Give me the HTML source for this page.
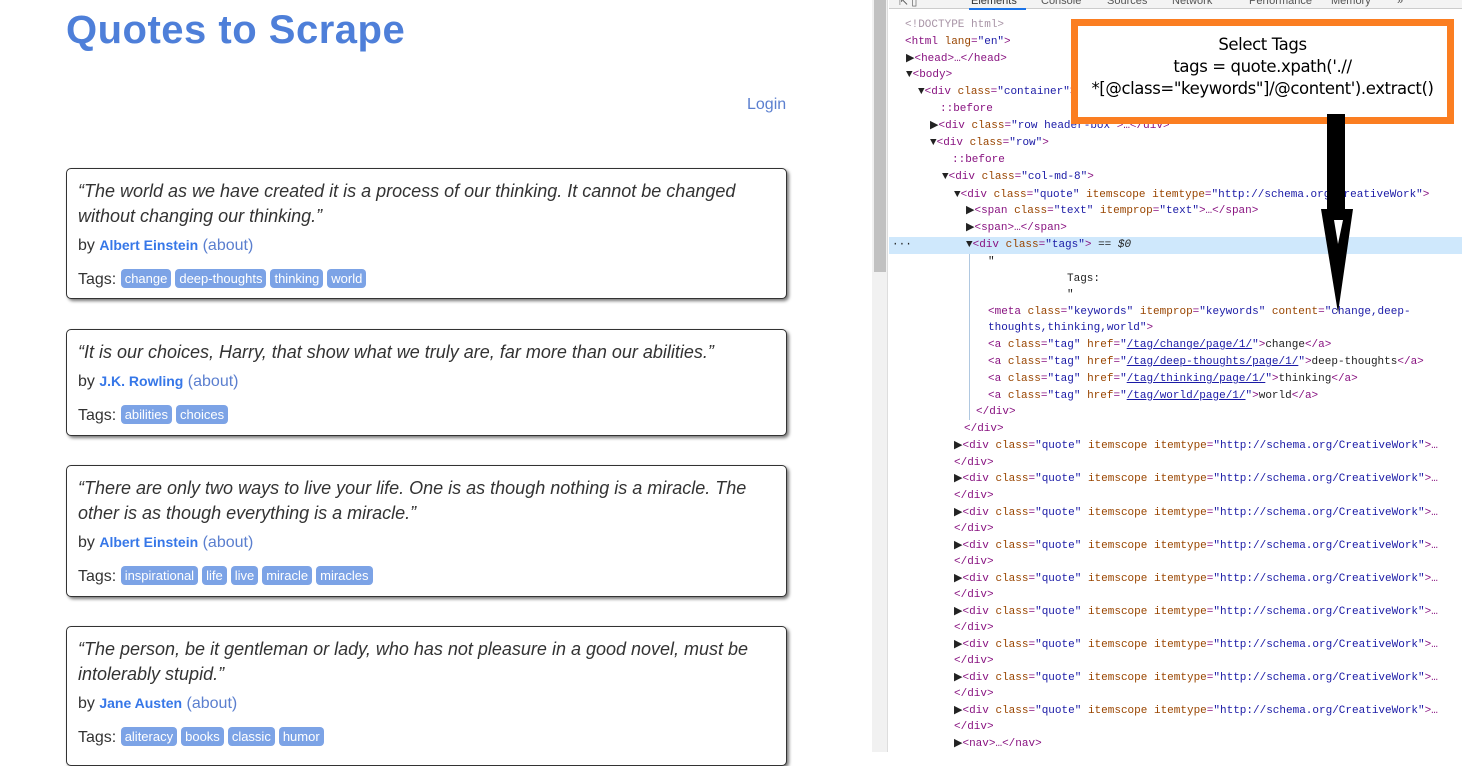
<!DOCTYPE html>
<html><head><meta charset="utf-8">
<style>
*{margin:0;padding:0;box-sizing:border-box}
body{width:1462px;height:752px;overflow:hidden;background:#fff;position:relative;font-family:"Liberation Sans",sans-serif}
.title{position:absolute;left:66px;top:8px;font-size:40px;font-weight:bold;color:#4e7fd9;letter-spacing:0.5px}
.login{position:absolute;left:747px;top:96px;font-size:16px;color:#5b7fcf}
.q{position:absolute;left:66px;width:721px;border:1px solid #333;border-radius:5px;box-shadow:2px 2px 3px #777;padding:10px 11px;color:#333;background:#fff}
.q .t{font-style:italic;font-size:18px;line-height:25px}
.q .b{font-size:16px;margin-top:6px;line-height:20px}
.q .b b{color:#3677e8;font-size:14px;font-weight:bold}
.q .b span{color:#5b7fcf}
.q .g{font-size:16px;margin-top:13px;line-height:20px}
.tag{display:inline-block;background:#7ca3e6;color:#fff;font-size:13px;padding:2px 4px 2px;border-radius:4px;margin-right:4px;line-height:15px;vertical-align:1px}
.sb{position:absolute;left:872px;top:0;width:16px;height:752px;background:#f1f1f1;border-right:1px solid #ddd}
.th{position:absolute;left:874px;top:0;width:12px;height:272px;background:#c1c1c1}
.tb{position:absolute;left:889px;top:0;width:573px;height:9px;border-bottom:1px solid #ccc;background:#f3f3f3;font-size:11px;color:#555;overflow:hidden}
.tb span{position:absolute;top:-5px}
.l{position:absolute;font-family:"Liberation Mono",monospace;font-size:11px;white-space:pre;color:#881280;line-height:14px}
.a{color:#994500}.v{color:#1a1aa6}.gr{color:#a894a6}.k{color:#222}.u{color:#1a1aa6;text-decoration:underline}
.hl{position:absolute;left:889px;top:237px;width:573px;height:17px;background:#cfe8fc}
.box{position:absolute;left:1071px;top:19px;width:383px;height:105px;border:7px solid #fb7e21;background:#fff;text-align:center;font-family:"DejaVu Sans","Liberation Sans",sans-serif;font-size:16.5px;line-height:22px;padding-top:8px;color:#000;letter-spacing:-0.4px}
</style></head><body>
<div class="title">Quotes to Scrape</div>
<div class="login">Login</div>

<div class="q" style="top:168px;height:131px"><div class="t">“The world as we have created it is a process of our thinking. It cannot be changed without changing our thinking.”</div><div class="b">by <b>Albert Einstein</b> <span>(about)</span></div><div class="g">Tags: <span class="tag">change</span><span class="tag">deep-thoughts</span><span class="tag">thinking</span><span class="tag">world</span></div></div>
<div class="q" style="top:329px;height:107px"><div class="t">“It is our choices, Harry, that show what we truly are, far more than our abilities.”</div><div class="b">by <b>J.K. Rowling</b> <span>(about)</span></div><div class="g">Tags: <span class="tag">abilities</span><span class="tag">choices</span></div></div>
<div class="q" style="top:465px;height:132px"><div class="t">“There are only two ways to live your life. One is as though nothing is a miracle. The other is as though everything is a miracle.”</div><div class="b">by <b>Albert Einstein</b> <span>(about)</span></div><div class="g">Tags: <span class="tag">inspirational</span><span class="tag">life</span><span class="tag">live</span><span class="tag">miracle</span><span class="tag">miracles</span></div></div>
<div class="q" style="top:626px;height:140px"><div class="t">“The person, be it gentleman or lady, who has not pleasure in a good novel, must be intolerably stupid.”</div><div class="b">by <b>Jane Austen</b> <span>(about)</span></div><div class="g">Tags: <span class="tag">aliteracy</span><span class="tag">books</span><span class="tag">classic</span><span class="tag">humor</span></div></div>

<div class="sb"></div><div class="th"></div>
<div class="tb"><span style="left:10px">⇱ ▯</span><span style="left:82px;color:#333">Elements</span><span style="left:152px">Console</span><span style="left:218px">Sources</span><span style="left:283px">Network</span><span style="left:360px">Performance</span><span style="left:442px">Memory</span><span style="left:508px">»</span></div>
<div style="position:absolute;left:969px;top:8px;width:57px;height:2px;background:#1a73e8"></div>
<div class="hl"></div>
<div style="position:absolute;left:969px;top:254px;width:1px;height:166px;background:#b0c8e0"></div>

<div class="l gr" style="left:905px;top:18px">&lt;!DOCTYPE html&gt;</div>
<div class="l" style="left:905px;top:35px">&lt;html <span class="a">lang</span>=<span class="v">"en"</span>&gt;</div>
<div class="l" style="left:906px;top:52px"><span class="k">▶</span>&lt;head&gt;…&lt;/head&gt;</div>
<div class="l" style="left:906px;top:68px"><span class="k">▼</span>&lt;body&gt;</div>
<div class="l" style="left:918px;top:85px"><span class="k">▼</span>&lt;div <span class="a">class</span>=<span class="v">"container"</span>&gt;</div>
<div class="l" style="left:940px;top:102px">::before</div>
<div class="l" style="left:930px;top:119px"><span class="k">▶</span>&lt;div <span class="a">class</span>=<span class="v">"row header-box"</span>&gt;…&lt;/div&gt;</div>
<div class="l" style="left:930px;top:136px"><span class="k">▼</span>&lt;div <span class="a">class</span>=<span class="v">"row"</span>&gt;</div>
<div class="l" style="left:952px;top:153px">::before</div>
<div class="l" style="left:942px;top:170px"><span class="k">▼</span>&lt;div <span class="a">class</span>=<span class="v">"col-md-8"</span>&gt;</div>
<div class="l" style="left:954px;top:188px"><span class="k">▼</span>&lt;div <span class="a">class</span>=<span class="v">"quote"</span> <span class="a">itemscope</span> <span class="a">itemtype</span>=<span class="v">"http://schema.org/CreativeWork"</span>&gt;</div>
<div class="l" style="left:966px;top:204px"><span class="k">▶</span>&lt;span <span class="a">class</span>=<span class="v">"text"</span> <span class="a">itemprop</span>=<span class="v">"text"</span>&gt;…&lt;/span&gt;</div>
<div class="l" style="left:966px;top:221px"><span class="k">▶</span>&lt;span&gt;…&lt;/span&gt;</div>
<div class="l k" style="left:892px;top:238px">···</div>
<div class="l" style="left:966px;top:238px"><span class="k">▼</span>&lt;div <span class="a">class</span>=<span class="v">"tags"</span>&gt; <span class="k">== <i>$0</i></span></div>
<div class="l k" style="left:988px;top:255px">"</div>
<div class="l k" style="left:1067px;top:272px">Tags:</div>
<div class="l k" style="left:1067px;top:288px">"</div>
<div class="l" style="left:988px;top:305px">&lt;meta <span class="a">class</span>=<span class="v">"keywords"</span> <span class="a">itemprop</span>=<span class="v">"keywords"</span> <span class="a">content</span>=<span class="v">"change,deep-</span></div>
<div class="l v" style="left:988px;top:321px">thoughts,thinking,world"<span style="color:#881280">&gt;</span></div>
<div class="l" style="left:988px;top:338px">&lt;a <span class="a">class</span>=<span class="v">"tag"</span> <span class="a">href</span>=<span class="v">"<span class="u">/tag/change/page/1/</span>"</span>&gt;<span class="k">change</span>&lt;/a&gt;</div>
<div class="l" style="left:988px;top:355px">&lt;a <span class="a">class</span>=<span class="v">"tag"</span> <span class="a">href</span>=<span class="v">"<span class="u">/tag/deep-thoughts/page/1/</span>"</span>&gt;<span class="k">deep-thoughts</span>&lt;/a&gt;</div>
<div class="l" style="left:988px;top:372px">&lt;a <span class="a">class</span>=<span class="v">"tag"</span> <span class="a">href</span>=<span class="v">"<span class="u">/tag/thinking/page/1/</span>"</span>&gt;<span class="k">thinking</span>&lt;/a&gt;</div>
<div class="l" style="left:988px;top:389px">&lt;a <span class="a">class</span>=<span class="v">"tag"</span> <span class="a">href</span>=<span class="v">"<span class="u">/tag/world/page/1/</span>"</span>&gt;<span class="k">world</span>&lt;/a&gt;</div>
<div class="l" style="left:976px;top:405px">&lt;/div&gt;</div>
<div class="l" style="left:964px;top:422px">&lt;/div&gt;</div>

<div class="l" style="left:954px;top:439px"><span class="k">▶</span>&lt;div <span class="a">class</span>=<span class="v">"quote"</span> <span class="a">itemscope</span> <span class="a">itemtype</span>=<span class="v">"http://schema.org/CreativeWork"</span>&gt;…</div>
<div class="l" style="left:954px;top:456px">&lt;/div&gt;</div>
<div class="l" style="left:954px;top:472px"><span class="k">▶</span>&lt;div <span class="a">class</span>=<span class="v">"quote"</span> <span class="a">itemscope</span> <span class="a">itemtype</span>=<span class="v">"http://schema.org/CreativeWork"</span>&gt;…</div>
<div class="l" style="left:954px;top:489px">&lt;/div&gt;</div>
<div class="l" style="left:954px;top:506px"><span class="k">▶</span>&lt;div <span class="a">class</span>=<span class="v">"quote"</span> <span class="a">itemscope</span> <span class="a">itemtype</span>=<span class="v">"http://schema.org/CreativeWork"</span>&gt;…</div>
<div class="l" style="left:954px;top:522px">&lt;/div&gt;</div>
<div class="l" style="left:954px;top:539px"><span class="k">▶</span>&lt;div <span class="a">class</span>=<span class="v">"quote"</span> <span class="a">itemscope</span> <span class="a">itemtype</span>=<span class="v">"http://schema.org/CreativeWork"</span>&gt;…</div>
<div class="l" style="left:954px;top:555px">&lt;/div&gt;</div>
<div class="l" style="left:954px;top:572px"><span class="k">▶</span>&lt;div <span class="a">class</span>=<span class="v">"quote"</span> <span class="a">itemscope</span> <span class="a">itemtype</span>=<span class="v">"http://schema.org/CreativeWork"</span>&gt;…</div>
<div class="l" style="left:954px;top:588px">&lt;/div&gt;</div>
<div class="l" style="left:954px;top:605px"><span class="k">▶</span>&lt;div <span class="a">class</span>=<span class="v">"quote"</span> <span class="a">itemscope</span> <span class="a">itemtype</span>=<span class="v">"http://schema.org/CreativeWork"</span>&gt;…</div>
<div class="l" style="left:954px;top:621px">&lt;/div&gt;</div>
<div class="l" style="left:954px;top:638px"><span class="k">▶</span>&lt;div <span class="a">class</span>=<span class="v">"quote"</span> <span class="a">itemscope</span> <span class="a">itemtype</span>=<span class="v">"http://schema.org/CreativeWork"</span>&gt;…</div>
<div class="l" style="left:954px;top:654px">&lt;/div&gt;</div>
<div class="l" style="left:954px;top:671px"><span class="k">▶</span>&lt;div <span class="a">class</span>=<span class="v">"quote"</span> <span class="a">itemscope</span> <span class="a">itemtype</span>=<span class="v">"http://schema.org/CreativeWork"</span>&gt;…</div>
<div class="l" style="left:954px;top:687px">&lt;/div&gt;</div>
<div class="l" style="left:954px;top:704px"><span class="k">▶</span>&lt;div <span class="a">class</span>=<span class="v">"quote"</span> <span class="a">itemscope</span> <span class="a">itemtype</span>=<span class="v">"http://schema.org/CreativeWork"</span>&gt;…</div>
<div class="l" style="left:954px;top:720px">&lt;/div&gt;</div>
<div class="l" style="left:954px;top:737px"><span class="k">▶</span>&lt;nav&gt;…&lt;/nav&gt;</div>

<div class="box">Select Tags<br>tags = quote.xpath('.//<br>*[@class="keywords"]/@content').extract()</div>
<svg style="position:absolute;left:0;top:0" width="1462" height="752">
<rect x="1327" y="114" width="18" height="96" fill="#000"/>
<polygon points="1321,209 1353,209 1338,313" fill="#000"/>
<polygon points="1334,220 1343,220 1338,244" fill="#fff"/>
</svg>
</body></html>
